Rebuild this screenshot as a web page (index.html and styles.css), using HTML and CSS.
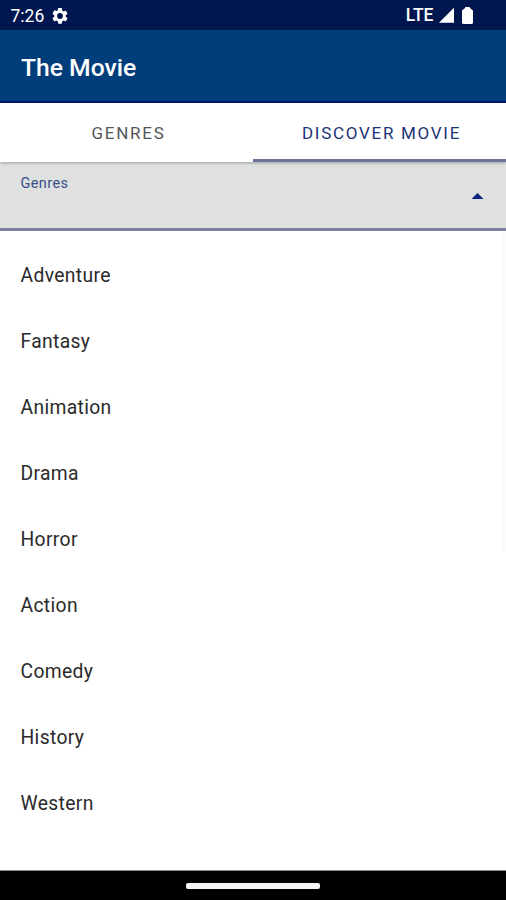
FILE: index.html
```html
<!DOCTYPE html>
<html lang="en">
<head>
<meta charset="utf-8">
<title>The Movie</title>
<link rel="stylesheet" href="styles.css">
</head>
<body>
<div class="phone">
  <div class="status">
    <span class="clock">7:26</span>
    <svg class="gear" viewBox="2 2 20 20"><path fill="#fff" d="M19.14 12.94c.04-.3.06-.61.06-.94 0-.32-.02-.64-.07-.94l2.03-1.58a.49.49 0 0 0 .12-.61l-1.92-3.32a.49.49 0 0 0-.59-.22l-2.39.96a7 7 0 0 0-1.62-.94l-.36-2.54A.48.48 0 0 0 13.92 2h-3.84a.48.48 0 0 0-.47.41l-.36 2.54c-.59.24-1.13.57-1.62.94l-2.39-.96a.48.48 0 0 0-.59.22L2.74 8.87a.48.48 0 0 0 .12.61l2.03 1.58a6 6 0 0 0 0 1.88l-2.03 1.58a.49.49 0 0 0-.12.61l1.92 3.32c.12.22.37.29.59.22l2.39-.96c.5.38 1.03.7 1.62.94l.36 2.54c.05.24.24.41.48.41h3.84c.24 0 .44-.17.47-.41l.36-2.54c.59-.24 1.13-.56 1.62-.94l2.39.96c.22.08.47 0 .59-.22l1.92-3.32a.48.48 0 0 0-.12-.61zM12 15.6a3.6 3.6 0 1 1 0-7.2 3.6 3.6 0 0 1 0 7.2z"/></svg>
    <span class="lte">LTE</span>
    <svg class="signal" viewBox="0 0 16 16"><path fill="#fff" d="M0 16 16 0V16z"/></svg>
    <svg class="battery" viewBox="0 0 11 17"><path fill="#fff" d="M3.500 0h4L8.500 1.500 11 3.500V15.500A1.500 1.500 0 0 1 9.500 17h-8A1.500 1.500 0 0 1 0 15.500V3.500L2.500 1.500z"/></svg>
  </div>
  <header class="appbar"><h1>The Movie</h1></header>
  <nav class="tabs">
    <div class="tab"><span>GENRES</span></div>
    <div class="tab active"><span>DISCOVER MOVIE</span></div>
  </nav>
  <div class="field">
    <span class="label">Genres</span>
    <svg class="arrow" viewBox="0 0 12 6"><path fill="#0a2580" d="M0 6 6 0l6 6z"/></svg>
  </div>
  <ul class="menu">
    <li>Adventure</li>
    <li>Fantasy</li>
    <li>Animation</li>
    <li>Drama</li>
    <li>Horror</li>
    <li>Action</li>
    <li>Comedy</li>
    <li>History</li>
    <li>Western</li>
  </ul>
  <footer class="navbar"><div class="handle"></div></footer>
</div>
</body>
</html>
```
FILE: styles.css
```css
* { box-sizing: border-box; }
body { margin: 0; font-family: Roboto, "Liberation Sans", sans-serif; background: #fff; }
.phone { width: 506px; height: 900px; display: flex; flex-direction: column; overflow: hidden; }
.status { height: 30px; flex: none; background: #00164f; color: #fff; display: flex; align-items: center; padding: 1px 33px 0 10.500px; }
.clock { font-size: 17.500px; line-height: 30px; }
.gear { width: 16px; height: 16px; margin-left: 7.500px; }
.lte { margin-left: auto; font-size: 17.500px; font-weight: 500; margin-top: -1px; }
.signal { width: 15.500px; height: 16px; margin-left: 5px; margin-top: -1px; }
.battery { width: 11px; height: 17px; margin-left: 8px; margin-top: -1px; }
.appbar { height: 73px; flex: none; background: #003e7b; border-bottom: 2px solid #00126e; padding: 0 21px; display: flex; align-items: center; }
h1 { margin: 4px 0 0; color: #fff; font-size: 24.700px; font-weight: 500; line-height: 30px; }
.tabs { height: 59px; flex: none; display: flex; background: #fff; position: relative; box-shadow: 0 1px 3px rgba(0,0,0,.3); }
.tab { flex: 1; display: flex; align-items: center; justify-content: center; padding: 4px 0 0 4px; color: #555; font-size: 17px; font-weight: 400; letter-spacing: 1.720px; border-bottom: 3px solid transparent; }
.tab.active { color: #1c3478; border-bottom-color: #6d7399; }
.field { height: 69px; flex: none; background: #dfe0e0; border-bottom: 3px solid #7b809b; padding: 12px 22px 0 20.500px; display: flex; justify-content: space-between; align-items: flex-start; }
.label { color: #384f8b; font-size: 14.500px; line-height: 19px; letter-spacing: .4px; }
.arrow { width: 13px; height: 6px; margin-top: 19px; }
.menu { flex: 1; margin: 0; padding: 12px 0 0; list-style: none; background: linear-gradient(#fcfcfc, #fcfcfc) right top / 4px 321px no-repeat #fff; }
.menu li { height: 66.050px; line-height: 66px; padding-left: 20.500px; font-size: 19.300px; letter-spacing: .35px; color: #2a2a2a; }
.navbar { height: 30px; flex: none; background: #000; border-top: 1px solid #888; display: flex; justify-content: center; padding-top: 12px; }
.handle { width: 134px; height: 6px; border-radius: 2px; background: #f5f3f5; }
```
